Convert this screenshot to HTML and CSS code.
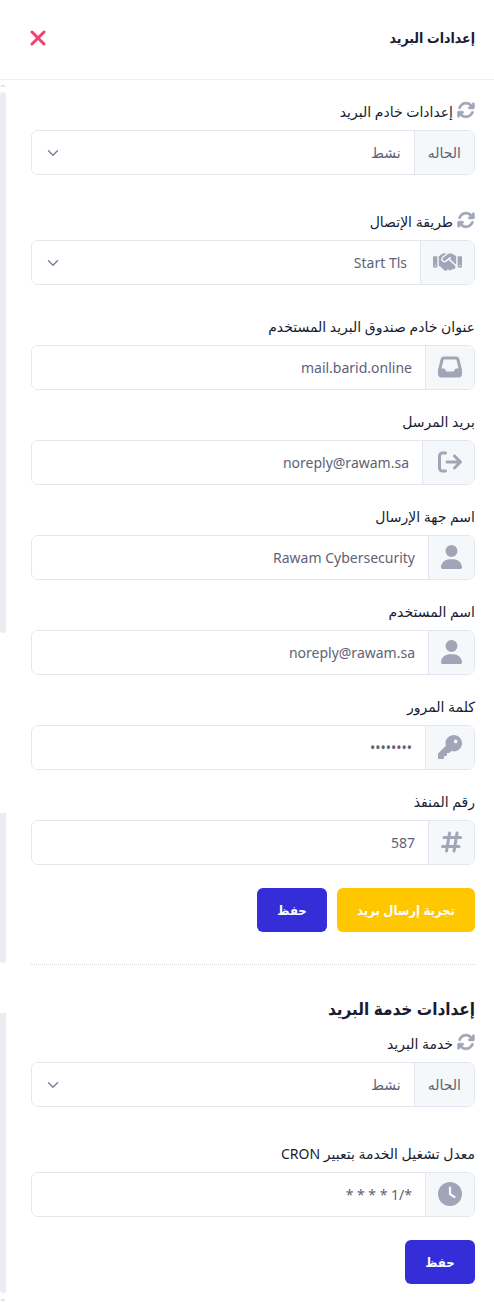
FILE: index.html
```html
<!DOCTYPE html>
<html lang="ar" dir="rtl">
<head>
    <meta charset="UTF-8">
    <meta name="viewport" content="width=device-width, initial-scale=1.0">
    <title>إعدادات البريد</title>
    <link rel="stylesheet" href="styles.css">
</head>
<body>
    <svg class="sprite" aria-hidden="true">
        <symbol id="i-sync" viewBox="0 0 512 512"><path d="M105.1 202.6c7.7-21.8 20.2-42.3 37.8-59.8c62.5-62.5 163.8-62.5 226.3 0L386.3 160H352c-17.7 0-32 14.3-32 32s14.3 32 32 32H463.9c17.7 0 32-14.3 32-32V80c0-17.7-14.3-32-32-32s-32 14.3-32 32v35.2L414.4 97.6c-87.5-87.5-229.3-87.5-316.8 0C73.2 122 55.6 150.7 44.8 181.4c-5.9 16.7 2.9 34.9 19.5 40.8s34.9-2.9 40.8-19.5zM39 289.3c-5 1.5-9.8 4.2-13.7 8.2c-4 4-6.7 8.8-8.1 14c-.3 1.2-.6 2.5-.8 3.8c-.3 1.7-.4 3.4-.4 5.1V432c0 17.7 14.3 32 32 32s32-14.3 32-32V396.9l17.6 17.5c87.5 87.4 229.3 87.4 316.7 0c24.4-24.4 42.1-53.1 52.9-83.7c5.9-16.7-2.9-34.9-19.5-40.8s-34.9 2.9-40.8 19.5c-7.7 21.8-20.2 42.3-37.8 59.8c-62.5 62.5-163.8 62.5-226.3 0L125.6 352H160c17.7 0 32-14.3 32-32s-14.3-32-32-32H48.4c-1.6 0-3.2 .1-4.8 .3s-3.1 .5-4.6 1z"/></symbol>
        <symbol id="i-user" viewBox="0 0 448 512"><path d="M224 256A128 128 0 1 0 224 0a128 128 0 1 0 0 256zm-45.7 48C79.8 304 0 383.8 0 482.3C0 498.7 13.3 512 29.7 512H418.3c16.4 0 29.7-13.3 29.7-29.7C448 383.8 368.2 304 269.7 304H178.3z"/></symbol>
    </svg>

    <header class="header">
        <h1>إعدادات البريد</h1>
        <button type="button" class="close" aria-label="إغلاق">
            <svg viewBox="0 0 16 16"><path d="M2 2l12 12M14 2L2 14"/></svg>
        </button>
    </header>

    <div class="content">
        <main class="main">
            <form class="form">
                <div class="field field-status">
                    <label for="serverStatus"><svg class="sync"><use href="#i-sync"/></svg>إعدادات خادم البريد</label>
                    <div class="group">
                        <span class="addon addon-text">الحاله</span>
                        <select id="serverStatus"><option>نشط</option></select>
                    </div>
                </div>

                <div class="field field-connection">
                    <label for="connection"><svg class="sync"><use href="#i-sync"/></svg>طريقة الإتصال</label>
                    <div class="group">
                        <span class="addon">
                            <svg class="icon icon-wide" viewBox="0 0 640 512"><path d="M323.4 85.2l-96.8 78.4c-16.1 13-19.2 36.4-7 53.1c12.9 17.8 38 21.3 55.3 7.8l99.3-77.2c7-5.4 17-4.2 22.5 2.8s4.2 17-2.8 22.5l-20.9 16.2L512 316.8V128h-.7l-3.9-2.5L434.8 79c-15.3-9.8-33.2-15-51.4-15c-21.8 0-43 7.5-60 21.2zm22.8 124.4l-51.7 40.2C263 274.3 217.3 268 193.7 235.6c-22.2-30.5-16.6-73.1 12.7-96.8l83.2-67.3c-11.6-4.9-24.1-7.4-36.8-7.4C234 64 215.7 69.6 200 80l-72 48V352h28.2l91.4 83.4c19.6 17.9 49.9 16.5 67.8-3.1c5.5-6.1 9.2-13.2 11.1-20.6l17 15.6c19.5 17.9 49.9 16.6 67.8-2.9c4.5-4.9 7.8-10.6 9.9-16.5c19.4 13 45.8 10.3 62.1-7.5c17.9-19.5 16.6-49.9-2.9-67.8l-134.2-123zM16 128c-8.8 0-16 7.2-16 16V352c0 17.7 14.3 32 32 32H64c17.7 0 32-14.3 32-32V128H16zM48 320a16 16 0 1 1 0 32 16 16 0 1 1 0-32zM544 128V352c0 17.7 14.3 32 32 32h32c17.7 0 32-14.3 32-32V144c0-8.8-7.2-16-16-16H544zm32 208a16 16 0 1 1 32 0 16 16 0 1 1 -32 0z"/></svg>
                        </span>
                        <select id="connection"><option>Start Tls</option></select>
                    </div>
                </div>

                <div class="field">
                    <label for="host">عنوان خادم صندوق البريد المستخدم</label>
                    <div class="group">
                        <span class="addon">
                            <svg class="icon" viewBox="0 0 512 512"><path d="M121 32C91.6 32 66 52 58.9 80.5L1.9 308.4C.6 313.5 0 318.7 0 323.9V416c0 35.3 28.7 64 64 64H448c35.3 0 64-28.7 64-64V323.9c0-5.2-.6-10.4-1.9-15.5l-57-227.9C446 52 420.4 32 391 32H121zm0 64H391l48 192H387.8c-12.1 0-23.2 6.8-28.6 17.7l-14.3 28.6c-5.4 10.8-16.5 17.7-28.6 17.7H195.8c-12.1 0-23.2-6.8-28.6-17.7l-14.3-28.6c-5.4-10.8-16.5-17.7-28.6-17.7H73L121 96z"/></svg>
                        </span>
                        <input type="text" id="host" value="mail.barid.online">
                    </div>
                </div>

                <div class="field">
                    <label for="sender">بريد المرسل</label>
                    <div class="group">
                        <span class="addon addon-sender">
                            <svg class="icon" viewBox="0 0 512 512"><path d="M502.6 278.6c12.5-12.5 12.5-32.8 0-45.3l-128-128c-12.5-12.5-32.8-12.5-45.3 0s-12.5 32.8 0 45.3L402.7 224 192 224c-17.7 0-32 14.3-32 32s14.3 32 32 32l210.7 0-73.4 73.4c-12.5 12.5-12.5 32.8 0 45.3s32.8 12.5 45.3 0l128-128zM160 96c17.7 0 32-14.3 32-32s-14.3-32-32-32L96 32C43 32 0 75 0 128L0 384c0 53 43 96 96 96l64 0c17.7 0 32-14.3 32-32s-14.3-32-32-32l-64 0c-17.7 0-32-14.3-32-32l0-256c0-17.7 14.3-32 32-32l64 0z"/></svg>
                        </span>
                        <input type="text" id="sender" value="noreply@rawam.sa">
                    </div>
                </div>

                <div class="field">
                    <label for="senderName">اسم جهة الإرسال</label>
                    <div class="group">
                        <span class="addon"><svg class="icon icon-narrow"><use href="#i-user"/></svg></span>
                        <input type="text" id="senderName" value="Rawam Cybersecurity">
                    </div>
                </div>

                <div class="field">
                    <label for="username">اسم المستخدم</label>
                    <div class="group">
                        <span class="addon"><svg class="icon icon-narrow"><use href="#i-user"/></svg></span>
                        <input type="text" id="username" value="noreply@rawam.sa">
                    </div>
                </div>

                <div class="field">
                    <label for="password">كلمة المرور</label>
                    <div class="group">
                        <span class="addon">
                            <svg class="icon" viewBox="0 0 512 512"><path d="M336 352c97.2 0 176-78.8 176-176S433.2 0 336 0S160 78.8 160 176c0 18.7 2.9 36.8 8.3 53.7L7 391c-4.5 4.5-7 10.6-7 17v80c0 13.3 10.7 24 24 24h80c13.3 0 24-10.7 24-24V448h40c13.3 0 24-10.7 24-24V384h40c6.4 0 12.5-2.5 17-7l33.3-33.3c16.9 5.4 35 8.3 53.7 8.3zM376 96a40 40 0 1 1 0 80 40 40 0 1 1 0-80z"/></svg>
                        </span>
                        <input type="password" id="password" value="password">
                    </div>
                </div>

                <div class="field">
                    <label for="port">رقم المنفذ</label>
                    <div class="group">
                        <span class="addon">
                            <svg class="icon icon-narrow icon-hash" viewBox="0 0 448 512"><path d="M182 64l-64 384M342 64l-64 384M64 160H416M32 352H384"/></svg>
                        </span>
                        <input type="text" id="port" value="587">
                    </div>
                </div>

                <div class="actions">
                    <button type="button" class="btn btn-warning">تجربة إرسال بريد</button>
                    <button type="submit" class="btn btn-primary">حفظ</button>
                </div>
            </form>

            <hr>

            <form class="form">
                <h2>إعدادات خدمة البريد</h2>
                <div class="field field-status">
                    <label for="serviceStatus"><svg class="sync"><use href="#i-sync"/></svg>خدمة البريد</label>
                    <div class="group">
                        <span class="addon addon-text">الحاله</span>
                        <select id="serviceStatus"><option>نشط</option></select>
                    </div>
                </div>

                <div class="field">
                    <label for="cron">معدل تشغيل الخدمة بتعبير CRON</label>
                    <div class="group">
                        <span class="addon">
                            <svg class="icon" viewBox="0 0 512 512"><path d="M256 0a256 256 0 1 1 0 512A256 256 0 1 1 256 0zM232 120V256c0 8 4 15.5 10.7 20l96 64c11 7.4 25.9 4.4 33.3-6.7s4.4-25.9-6.7-33.3L280 243.2V120c0-13.3-10.7-24-24-24s-24 10.7-24 24z"/></svg>
                        </span>
                        <input type="text" id="cron" value="*/1 * * * *">
                    </div>
                </div>

                <div class="actions">
                    <button type="submit" class="btn btn-primary">حفظ</button>
                </div>
            </form>
        </main>

        <div class="track" aria-hidden="true">
            <span class="arrow arrow-up"></span>
            <span class="thumb thumb-first"></span>
            <span class="thumb thumb-second"></span>
            <span class="thumb thumb-last"></span>
            <span class="arrow arrow-down"></span>
        </div>
    </div>
</body>
</html>
```
FILE: styles.css
```css
* {
    box-sizing: border-box;
}
body {
    font-family: "Noto Sans", "DejaVu Sans", sans-serif;
    font-size: 14px;
    color: #181c32;
    background-color: #fff;
    margin: 0;
}
h1,
h2,
.btn {
    font-family: "Noto Sans", "DejaVu Sans Condensed", sans-serif;
    font-weight: bold;
}
.sprite {
    display: none;
}
svg {
    flex: none;
    fill: #a1a5b7;
}
.header {
    display: flex;
    align-items: center;
    justify-content: space-between;
    height: 80px;
    padding: 0 19px 4px 30px;
    border-bottom: 1px solid #eff2f5;
}
.header h1 {
    font-size: 14px;
    margin: 0;
}
.close {
    width: 16px;
    height: 16px;
    padding: 0;
    border: none;
    background: none;
    cursor: pointer;
}
.close svg {
    display: block;
    width: 16px;
    height: 16px;
    stroke: #f1416c;
    stroke-width: 3;
    stroke-linecap: round;
}
.content {
    display: flex;
}
.main {
    flex: 1;
    min-width: 0;
    padding: 20px 19px 19px 25px;
}
.field {
    margin-bottom: 20px;
}
.field-status {
    margin-bottom: 35px;
}
.field-connection {
    margin-bottom: 30px;
}
label {
    display: flex;
    align-items: center;
    gap: 4px;
    height: 22px;
    margin-bottom: 8px;
}
.sync {
    width: 18px;
    height: 18px;
    margin-bottom: 2px;
    stroke: #a1a5b7;
    stroke-width: 16;
}
.group {
    display: flex;
    height: 45px;
    border: 1px solid #e4e6ef;
    border-radius: 7px;
    overflow: hidden;
}
.addon {
    display: flex;
    align-items: center;
    padding: 0 12px;
    border-left: 1px solid #e4e6ef;
    background-color: #f5f8fa;
    color: #5e6278;
}
.addon-text {
    padding: 0 13px;
}
.addon-sender {
    padding-left: 15px;
}
.icon {
    width: 24px;
    height: 24px;
    margin-bottom: 2px;
}
.icon-narrow {
    width: 21px;
}
.icon-wide {
    width: 29px;
}
.icon-hash {
    fill: none;
    stroke: #a1a5b7;
    stroke-width: 64;
    stroke-linecap: round;
}
input,
select {
    flex: 1;
    min-width: 0;
    padding: 0 13px 1px;
    border: none;
    outline: none;
    font: inherit;
    color: #5e6278;
    background-color: #fff;
}
select {
    appearance: none;
    background-image: url("data:image/svg+xml,%3Csvg xmlns='http://www.w3.org/2000/svg' viewBox='0 0 16 16'%3E%3Cpath fill='none' stroke='%237e8299' stroke-width='2' stroke-linecap='round' stroke-linejoin='round' d='M2 5l6 6 6-6'/%3E%3C/svg%3E");
    background-repeat: no-repeat;
    background-position: left 15px center;
    background-size: 12px 12px;
}
.actions {
    display: flex;
    gap: 10px;
    padding-top: 3px;
}
.btn {
    height: 44px;
    padding: 0 20px;
    border: none;
    border-radius: 6px;
    font-size: 13px;
    color: #fff;
    cursor: pointer;
}
.btn-primary {
    min-width: 70px;
    background-color: #352dd8;
}
.btn-warning {
    background-color: #ffc700;
}
hr {
    margin: 32px 0 28px;
    border: none;
    border-top: 1px dotted #d8d8e5;
}
h2 {
    font-size: 17px;
    line-height: 32px;
    margin: 0 0 7px;
}
.track {
    display: flex;
    flex-direction: column;
    width: 6px;
    padding: 4px 0 1px;
}
.arrow {
    border: 3px solid transparent;
    border-top-width: 0;
    border-bottom: 3px solid #e4e6ef;
}
.arrow-down {
    border-top: 3px solid #e4e6ef;
    border-bottom-width: 0;
    margin-top: 6px;
}
.thumb {
    background-color: #e9ecf1;
    border-radius: 0 0 3px 3px;
}
.thumb-first {
    height: 541px;
    margin-top: 5px;
    border-radius: 3px;
}
.thumb-second {
    height: 150px;
    margin-top: 180px;
}
.thumb-last {
    flex: 1;
    margin-top: 50px;
}
```
